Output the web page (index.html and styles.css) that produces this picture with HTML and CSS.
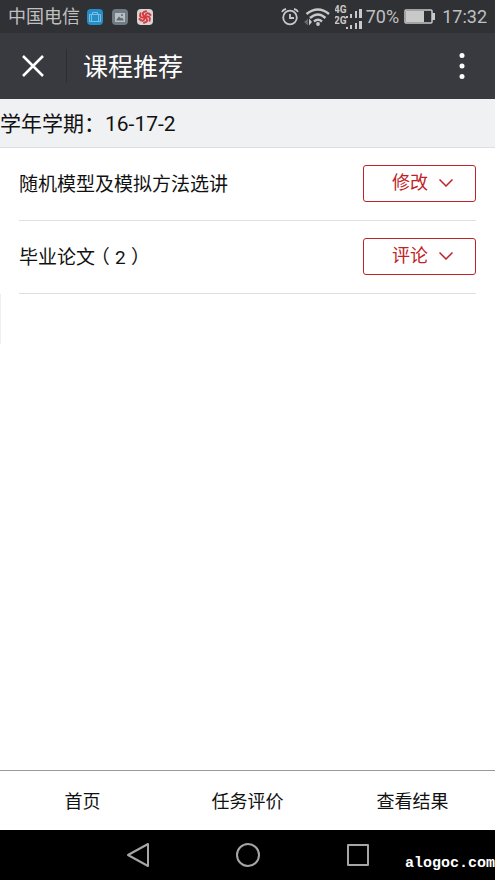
FILE: index.html
```html
<!DOCTYPE html>
<html lang="zh-CN">
<head>
<meta charset="utf-8">
<meta name="viewport" content="width=device-width, initial-scale=1">
<title>课程推荐</title>
<link rel="stylesheet" href="styles.css">
</head>
<body>
<div class="status">
  <span class="carrier">中国电信</span>
  <div class="notices">
    <svg width="16" height="16" viewBox="0 0 16 16"><rect width="16" height="16" rx="4" fill="#238fca"/><path d="M2.500 5.500h11v7h-11zM5.500 5.500v-2h5v2M4.500 5.500v7M11.500 5.500v7" fill="none" stroke="#83bddc"/></svg>
    <svg width="16" height="16" viewBox="0 0 16 16"><rect width="16" height="16" rx="4" fill="#707b85"/><rect x="3" y="4" width="10" height="9" fill="#b9bec2"/><path d="M4 11.500l3-4 2 2 1-1 2 3z" fill="#5d6871"/><circle cx="10" cy="6" r="1" fill="#5d6871"/></svg>
    <svg width="16" height="16" viewBox="0 0 16 16"><rect width="16" height="16" rx="4" fill="#d9d5d5"/><g fill="none" stroke="#d63b40" stroke-width="2" stroke-linecap="round"><path id="arm" d="M8 7Q10 2 13.500 6"/><use href="#arm" transform="rotate(60 8 8)"/><use href="#arm" transform="rotate(120 8 8)"/><use href="#arm" transform="rotate(180 8 8)"/><use href="#arm" transform="rotate(240 8 8)"/><use href="#arm" transform="rotate(300 8 8)"/></g></svg>
  </div>
  <div class="signals">
    <svg width="18" height="20" viewBox="0 0 18 20" fill="none" stroke="#c9c9ca" stroke-width="1.800"><circle cx="9" cy="10.500" r="6.800"/><path d="M1 5Q2 2.500 5 2M17 5Q16 2.500 13 2M9 7v4h4"/></svg>
    <svg width="26" height="20" viewBox="0 0 26 20"><g fill="none" stroke="#c9c9ca" stroke-width="2.400"><path d="M2.500 7Q14 -2 25 7M6 11Q14 4 21.500 11M10 14.500Q14 11 18 14.500"/></g><circle cx="14" cy="17" r="1.900" fill="#c9c9ca"/><path d="M4 11.500v7L0 15z" fill="#66676a"/><path d="M5 11.500v7l3-3.500z" fill="#c9c9ca"/></svg>
    <svg width="29" height="24" viewBox="0 0 29 24" fill="#c9c9ca"><text class="net" x="-1" y="8">4G</text><text class="net" x="-1" y="19">2G</text><path d="M11 11h2v2h-2zM15 9h2v4h-2zM20 6h2v7h-2zM24 4h3v9h-3zM11 22h2v2h-2zM15 20h2v4h-2zM20 18h2v6h-2zM24 16h3v8h-3z"/></svg>
    <span>70%</span>
    <svg class="battery" width="31" height="16" viewBox="0 0 31 16"><rect x="1" y="1" width="27" height="13" rx="1" fill="none" stroke="#c9c9ca" stroke-width="1.500"/><path d="M2 2h18v11H2zM28 4h3v7h-3z" fill="#c9c9ca"/></svg>
    <span>17:32</span>
  </div>
</div>
<header class="titlebar">
  <button class="close" type="button" aria-label="关闭"><svg width="22" height="22" viewBox="0 0 22 22" fill="none" stroke="#fff" stroke-width="2.500"><path d="M1 1l20 20M21 1L1 21"/></svg></button>
  <h1>课程推荐</h1>
  <button class="more" type="button" aria-label="更多"><svg width="6" height="28" viewBox="0 0 6 28" fill="#fff"><circle cx="3" cy="3.500" r="2.500"/><circle cx="3" cy="14" r="2.500"/><circle cx="3" cy="24.500" r="2.500"/></svg></button>
</header>
<p class="term">学年学期：16-17-2</p>
<main>
  <ul class="courses">
    <li><span class="name">随机模型及模拟方法选讲</span><button type="button">修改<svg width="14" height="8" viewBox="0 0 14 8"><path d="M.500 .500L7 7l6.500-6.500"/></svg></button></li>
    <li><span class="name">毕业论文<span class="paren">（</span>2<span class="paren">）</span></span><button type="button">评论<svg width="14" height="8" viewBox="0 0 14 8"><path d="M.500 .500L7 7l6.500-6.500"/></svg></button></li>
  </ul>
  <div class="edge"></div>
</main>
<nav class="tabs">
  <a href="#home">首页</a>
  <a href="#tasks">任务评价</a>
  <a href="#results">查看结果</a>
</nav>
<div class="system">
  <button type="button" aria-label="返回"><svg width="26" height="26" viewBox="0 0 26 26"><path d="M3 13L23 2v22z"/></svg></button>
  <button type="button" aria-label="主屏幕"><svg width="26" height="26" viewBox="0 0 26 26"><circle cx="13" cy="13" r="11"/></svg></button>
  <button type="button" aria-label="最近任务"><svg width="26" height="26" viewBox="0 0 26 26"><rect x="3" y="3" width="20" height="20"/></svg></button>
  <span class="mark">alogoc.com</span>
</div>
</body>
</html>
```
FILE: styles.css
```css
* {
  box-sizing: border-box;
}

body {
  margin: 0;
  min-height: 100vh;
  display: flex;
  flex-direction: column;
  background: #fff;
  color: #111;
  font-family: Roboto, "Noto Sans CJK SC", sans-serif;
}

button {
  padding: 0;
  border: 0;
  background: none;
  font: inherit;
}

svg {
  display: block;
  flex: none;
}

.status {
  display: flex;
  align-items: center;
  height: 33px;
  padding: 0 8px;
  background: #303135;
  color: #c0c0c1;
  font-size: 18px;
  line-height: 34px;
}

.notices {
  display: flex;
  gap: 9px;
  margin-left: 7px;
}

.signals {
  display: flex;
  align-items: center;
  gap: 5px;
  margin-left: auto;
}

.signals svg + span {
  margin-left: -3px;
}

.signals .battery + span {
  margin-left: 2px;
}

.net {
  font: bold 10px Roboto, sans-serif;
}

.titlebar {
  display: flex;
  align-items: center;
  height: 66px;
  background: #393a3f;
  color: #fff;
}

.close {
  display: grid;
  place-items: center;
  width: 67px;
  height: 34px;
  border-right: 1px solid #2c2d31;
}

.titlebar h1 {
  margin: 0 0 0 16px;
  padding-top: 4px;
  font-size: 25px;
  font-weight: 400;
  line-height: 36px;
}

.more {
  margin: 0 30px 0 auto;
}

.term {
  margin: 0;
  height: 49px;
  border-bottom: 1px solid #dcdee0;
  background: #f0f1f3;
  font-size: 21px;
  line-height: 50px;
}

main {
  flex: 1;
}

.courses {
  margin: 0;
  padding: 0 19px;
  list-style: none;
  font-size: 19px;
}

.courses li {
  display: flex;
  justify-content: space-between;
  align-items: center;
  height: 73px;
  padding-bottom: 2px;
  border-bottom: 1px solid #dfdfdf;
}

.name {
  padding-bottom: 2px;
}

/* Half-width brackets, centred in a full-width cell */
.paren {
  display: inline-block;
  width: 20px;
  font-feature-settings: "halt";
  text-align: center;
}

.courses button {
  display: flex;
  align-items: center;
  justify-content: center;
  gap: 11px;
  width: 113px;
  height: 37px;
  padding-left: 6px;
  border: 1px solid #c12226;
  border-radius: 3px;
  color: #c12226;
  font-size: 18px;
  line-height: 32px;
}

.courses path {
  fill: none;
  stroke: #c12226;
  stroke-width: 1.5;
}

.edge {
  width: 1px;
  height: 50px;
  background: #eee;
}

.tabs {
  display: grid;
  grid-template-columns: repeat(3, 1fr);
  height: 60px;
  border-top: 1px solid #999;
}

.tabs a {
  color: #111;
  font-size: 18px;
  line-height: 62px;
  text-align: center;
  text-decoration: none;
}

.system {
  position: relative;
  display: flex;
  align-items: center;
  justify-content: center;
  gap: 84px;
  height: 50px;
  background: #000;
}

.system svg {
  fill: none;
  stroke: #a6a6a6;
  stroke-width: 2;
  stroke-linejoin: round;
}

.mark {
  position: absolute;
  right: 0;
  bottom: 8px;
  color: #fff;
  font: bold 15px/17px "Liberation Mono", monospace;
}
```
